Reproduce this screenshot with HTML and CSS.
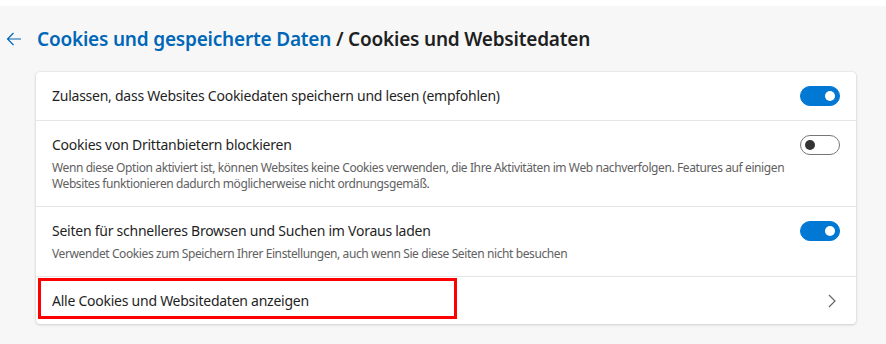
FILE: index.html
```html
<!DOCTYPE html>
<html lang="de">
<head>
<meta charset="UTF-8">
<meta name="viewport" content="width=device-width, initial-scale=1.0">
<title>Cookies und Websitedaten</title>
<link rel="stylesheet" href="styles.css">
</head>
<body>
<div class="page">
    <div class="header">
        <svg class="back" width="16" height="14" viewBox="0 0 16 14">
            <path d="M15 7H1.5M7.5 1L1.5 7l6 6" fill="none" stroke="#0067b8" stroke-width="1.2"/>
        </svg>
        <h1><span class="crumb">Cookies und gespeicherte Daten</span> / Cookies und Websitedaten</h1>
    </div>

    <div class="card">
        <div class="row single">
            <div class="text">
                <div class="title">Zulassen, dass Websites Cookiedaten speichern und lesen (empfohlen)</div>
            </div>
            <span class="toggle on"></span>
        </div>

        <div class="row">
            <div class="text">
                <div class="title">Cookies von Drittanbietern blockieren</div>
                <div class="desc">Wenn diese Option aktiviert ist, können Websites keine Cookies verwenden, die Ihre Aktivitäten im Web nachverfolgen. Features auf einigen Websites funktionieren dadurch möglicherweise nicht ordnungsgemäß.</div>
            </div>
            <span class="toggle"></span>
        </div>

        <div class="row">
            <div class="text">
                <div class="title">Seiten für schnelleres Browsen und Suchen im Voraus laden</div>
                <div class="desc">Verwendet Cookies zum Speichern Ihrer Einstellungen, auch wenn Sie diese Seiten nicht besuchen</div>
            </div>
            <span class="toggle on"></span>
        </div>

        <div class="row single link">
            <div class="text">
                <div class="title">Alle Cookies und Websitedaten anzeigen</div>
            </div>
            <svg class="chevron" width="10" height="14" viewBox="0 0 10 14">
                <path d="M2 1l6 6-6 6" fill="none" stroke="#666" stroke-width="1.2"/>
            </svg>
            <div class="highlight"></div>
        </div>
    </div>
</div>
</body>
</html>
```

FILE: styles.css
```css
body {
    margin: 0;
    background: #fff;
    font-family: "Noto Sans", "Open Sans", sans-serif;
    color: #1f1f1f;
}
.page {
    margin-top: 6px;
    height: 338px;
    background: #f7f7f7;
    overflow: hidden;
}
.header {
    display: flex;
    align-items: center;
    height: 66px;
    padding-left: 6px;
}
.back {
    margin-right: 15px;
    margin-top: -1px;
}
h1 {
    margin: 0;
    font-size: 19px;
    font-weight: 600;
    color: #1f1f1f;
    letter-spacing: -0.2px;
}
.crumb {
    color: #0067b8;
}
.card {
    position: relative;
    margin-left: 36px;
    width: 820px;
    background: #fff;
    border-radius: 4px;
    box-shadow: 0 0 2px rgba(0,0,0,0.12), 0 1px 3px rgba(0,0,0,0.14);
}
.row {
    position: relative;
    display: flex;
    align-items: flex-start;
    padding: 14px 16px 14px 16px;
    border-top: 1px solid #e6e6e6;
}
.row:first-child {
    border-top: none;
}
.row.single {
    align-items: center;
    height: 48px;
    padding-top: 0;
    padding-bottom: 0;
    box-sizing: border-box;
}
.text {
    flex: 1;
}
.title {
    font-size: 14px;
    line-height: 20px;
    letter-spacing: -0.25px;
}
.desc {
    margin-top: 5px;
    font-size: 12px;
    line-height: 16px;
    color: #616161;
    letter-spacing: -0.4px;
    padding-right: 4px;
}
.toggle {
    position: relative;
    flex: none;
    width: 40px;
    height: 20px;
    box-sizing: border-box;
    border: 1px solid #767676;
    border-radius: 10px;
    background: #fff;
}
.toggle::after {
    content: "";
    position: absolute;
    left: 4px;
    top: 4px;
    width: 10px;
    height: 10px;
    border-radius: 50%;
    background: #333;
}
.toggle.on {
    background: #0078d4;
    border-color: #0078d4;
}
.toggle.on::after {
    left: auto;
    right: 4px;
    background: #fff;
}
.chevron {
    margin-right: 3px;
}
.highlight {
    position: absolute;
    left: 2px;
    top: 1px;
    width: 419px;
    height: 41px;
    box-sizing: border-box;
    border: 3px solid #f00;
}
```
